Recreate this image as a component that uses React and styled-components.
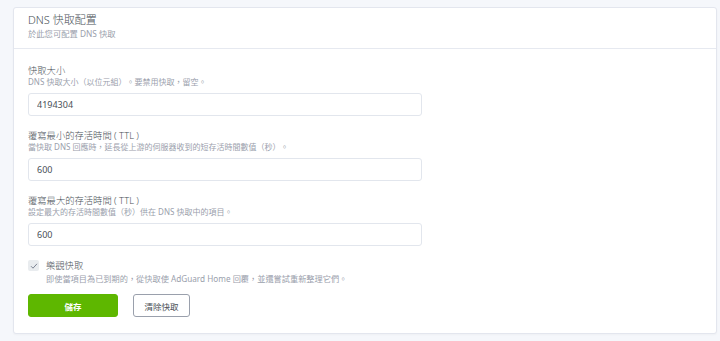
import React from "react";
import styled, { createGlobalStyle } from "styled-components";

const Global = createGlobalStyle`
  html, body { margin: 0; padding: 0; background: #f5f7fb; }
  body { font-family: "Noto Sans", "Noto Sans CJK TC", sans-serif; color: #495057; }
  * { box-sizing: border-box; }
`;

const Page = styled.div`
  padding: 7px 4px 10px 13px;
`;

const Card = styled.section`
  width: 704px;
  background: #fff;
  border: 1px solid #e3e6ee;
  border-radius: 3px;
  box-shadow: 0 1px 2px rgba(0, 0, 0, 0.03);
`;

const Header = styled.header`
  padding: 4px 14px 8px;
  border-bottom: 1px solid #e6e9f0;
`;

const Title = styled.h3`
  margin: 0;
  font-size: 11px;
  font-weight: 300;
  line-height: 16px;
  color: #495057;
`;

const Subtitle = styled.div`
  font-size: 8.3px;
  line-height: 12px;
  color: #9aa0ac;
`;

const Body = styled.div`
  padding: 16px 14px 16px;
`;

const Group = styled.div`
  width: 394px;
  margin-bottom: 14px;
`;

const Label = styled.div`
  font-size: 9.3px;
  font-weight: 300;
  line-height: 12px;
  color: #495057;
`;

const Desc = styled.div`
  font-size: 8px;
  line-height: 10px;
  color: #9aa0ac;
  margin-bottom: 6px;
`;

const Input = styled.input`
  display: block;
  width: 100%;
  height: 23px;
  padding: 0 8px;
  border: 1px solid #e2e6ed;
  border-radius: 3px;
  font-family: "Noto Sans", "Noto Sans CJK TC", sans-serif;
  font-size: 9px;
  color: #495057;
  background: #fff;
  outline: none;
`;

const CheckRow = styled.div`
  display: flex;
  align-items: flex-start;
  gap: 7px;
  margin-top: 8px;
`;

const Box = styled.span`
  flex: none;
  width: 11px;
  height: 11px;
  border-radius: 2px;
  background: #e9ecef;
  display: flex;
  align-items: center;
  justify-content: center;
`;

const CheckText = styled.div`
  display: flex;
  flex-direction: column;
`;

const CheckLabel = styled.div`
  font-size: 9.3px;
  font-weight: 300;
  line-height: 11px;
  color: #495057;
`;

const CheckDesc = styled.div`
  font-size: 8.2px;
  line-height: 11px;
  color: #9aa0ac;
  margin-top: 2px;
`;

const Actions = styled.div`
  display: flex;
  gap: 15px;
  margin-top: 10px;
`;

const Button = styled.button`
  height: 23px;
  width: ${(p) => p.$w}px;
  border-radius: 3px;
  font-family: "Noto Sans", "Noto Sans CJK TC", sans-serif;
  font-size: 8.5px;
  font-weight: ${(p) => (p.$primary ? 700 : 400)};
  color: ${(p) => (p.$primary ? "#fff" : "#495057")};
  background: ${(p) => (p.$primary ? "#5eb700" : "#fff")};
  border: 1px solid ${(p) => (p.$primary ? "#5eb700" : "#9aa0ac")};
  padding: 0;
  cursor: pointer;
`;

const fields = [
  { label: "快取大小", desc: "DNS 快取大小（以位元組）。要禁用快取，留空。", value: "4194304" },
  { label: "覆寫最小的存活時間 ( TTL )", desc: "當快取 DNS 回應時，延長從上游的伺服器收到的短存活時間數值（秒）。", value: "600" },
  { label: "覆寫最大的存活時間 ( TTL )", desc: "設定最大的存活時間數值（秒）供在 DNS 快取中的項目。", value: "600" },
];

export default function App() {
  return (
    <Page lang="zh-TW">
      <Global />
      <Card>
        <Header>
          <Title>DNS 快取配置</Title>
          <Subtitle>於此您可配置 DNS 快取</Subtitle>
        </Header>
        <Body>
          {fields.map((f) => (
            <Group key={f.label}>
              <Label>{f.label}</Label>
              <Desc>{f.desc}</Desc>
              <Input defaultValue={f.value} />
            </Group>
          ))}
          <CheckRow>
            <Box>
              <svg width="8" height="8" viewBox="0 0 8 8">
                <path d="M1 4.2 L3 6.2 L7 1.8" fill="none" stroke="#6e7687" strokeWidth="0.9" />
              </svg>
            </Box>
            <CheckText>
              <CheckLabel>樂觀快取</CheckLabel>
              <CheckDesc>即使當項目為已到期的，從快取使 AdGuard Home 回覆，並還嘗試重新整理它們。</CheckDesc>
            </CheckText>
          </CheckRow>
          <Actions>
            <Button $primary $w={90}>儲存</Button>
            <Button $w={57}>清除快取</Button>
          </Actions>
        </Body>
      </Card>
    </Page>
  );
}
